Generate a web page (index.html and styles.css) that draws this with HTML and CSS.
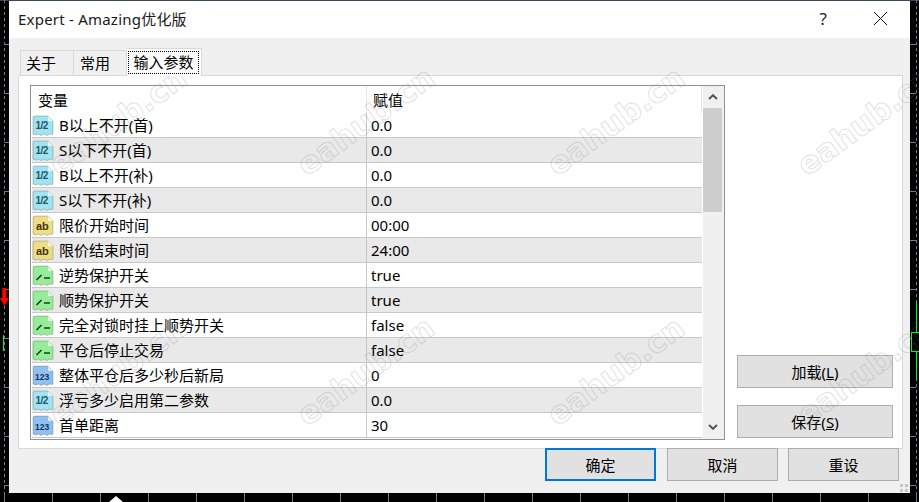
FILE: index.html
```html
<!DOCTYPE html>
<html lang="zh">
<head>
<meta charset="utf-8">
<title>Expert - Amazing优化版</title>
<link rel="stylesheet" href="styles.css">
</head>
<body>
<svg class="defs" width="0" height="0">
  <symbol id="doc" viewBox="0 0 22 22">
    <path d="M1 2.5 Q1 1 2.5 1 H16 L21 6 V18.5 Q21 19.5 19.5 19.5 L17.5 19 L15 20.5 L12 19 L9 20.5 L6.5 19 L4 20 L1 19 Z" fill="currentColor" stroke="rgba(0,0,0,.2)" stroke-width="1"/>
    <path d="M16 1 V6 H21 Z" fill="#fff" opacity=".7"/>
  </symbol>
</svg>

<div class="chart">
  <div class="arrow"></div>
  <div class="wick-l"></div>
  <div class="wick"></div>
  <div class="candle"></div>
  <div class="tip"></div>
  <div class="window">
    <header class="titlebar">
      <span class="title">Expert - Amazing优化版</span>
      <span class="help">?</span>
      <svg class="close" width="13" height="13" viewBox="0 0 13 13"><path d="M0 0 L13 13 M13 0 L0 13" stroke="#111" stroke-width="1"/></svg>
    </header>
    <main class="body">
      <nav class="tabs">
        <span class="tab tab-a">关于</span>
        <span class="tab tab-b">常用</span>
        <span class="tab active"><span class="focus">输入参数</span></span>
      </nav>
      <section class="pane">
        <div class="list">
          <div class="rows">
            <div class="row head"><span class="c1">变量</span><span class="c2">赋值</span></div>
            <div class="row"><span class="c1"><svg class="ic dbl" viewBox="0 0 22 22"><use href="#doc"/><text x="3.5" y="13.5" class="ico-txt">1/2</text></svg>B以上不开(首)</span><span class="c2">0.0</span></div>
            <div class="row alt"><span class="c1"><svg class="ic dbl" viewBox="0 0 22 22"><use href="#doc"/><text x="3.5" y="13.5" class="ico-txt">1/2</text></svg>S以下不开(首)</span><span class="c2">0.0</span></div>
            <div class="row"><span class="c1"><svg class="ic dbl" viewBox="0 0 22 22"><use href="#doc"/><text x="3.5" y="13.5" class="ico-txt">1/2</text></svg>B以上不开(补)</span><span class="c2">0.0</span></div>
            <div class="row alt"><span class="c1"><svg class="ic dbl" viewBox="0 0 22 22"><use href="#doc"/><text x="3.5" y="13.5" class="ico-txt">1/2</text></svg>S以下不开(补)</span><span class="c2">0.0</span></div>
            <div class="row"><span class="c1"><svg class="ic str" viewBox="0 0 22 22"><use href="#doc"/><text x="4" y="15" class="ico-txt ico-ab">ab</text></svg>限价开始时间</span><span class="c2">00:00</span></div>
            <div class="row alt"><span class="c1"><svg class="ic str" viewBox="0 0 22 22"><use href="#doc"/><text x="4" y="15" class="ico-txt ico-ab">ab</text></svg>限价结束时间</span><span class="c2">24:00</span></div>
            <div class="row"><span class="c1"><svg class="ic bool" viewBox="0 0 22 22"><use href="#doc"/><path d="M4.5 15 L9.5 10 M12 13 H18" class="ico-line"/></svg>逆势保护开关</span><span class="c2">true</span></div>
            <div class="row alt"><span class="c1"><svg class="ic bool" viewBox="0 0 22 22"><use href="#doc"/><path d="M4.5 15 L9.5 10 M12 13 H18" class="ico-line"/></svg>顺势保护开关</span><span class="c2">true</span></div>
            <div class="row"><span class="c1"><svg class="ic bool" viewBox="0 0 22 22"><use href="#doc"/><path d="M4.5 15 L9.5 10 M12 13 H18" class="ico-line"/></svg>完全对锁时挂上顺势开关</span><span class="c2">false</span></div>
            <div class="row alt"><span class="c1"><svg class="ic bool" viewBox="0 0 22 22"><use href="#doc"/><path d="M4.5 15 L9.5 10 M12 13 H18" class="ico-line"/></svg>平仓后停止交易</span><span class="c2">false</span></div>
            <div class="row"><span class="c1"><svg class="ic int" viewBox="0 0 22 22"><use href="#doc"/><text x="3" y="15" class="ico-txt ico-int">123</text></svg>整体平仓后多少秒后新局</span><span class="c2">0</span></div>
            <div class="row alt"><span class="c1"><svg class="ic dbl" viewBox="0 0 22 22"><use href="#doc"/><text x="3.5" y="13.5" class="ico-txt">1/2</text></svg>浮亏多少启用第二参数</span><span class="c2">0.0</span></div>
            <div class="row"><span class="c1"><svg class="ic int" viewBox="0 0 22 22"><use href="#doc"/><text x="3" y="15" class="ico-txt ico-int">123</text></svg>首单距离</span><span class="c2">30</span></div>
          </div>
          <div class="scrollbar">
            <svg class="arr" width="10" height="6" viewBox="0 0 10 6"><path d="M1 5 L5 1.2 L9 5" fill="none" stroke="#555" stroke-width="2"/></svg>
            <div class="track"><div class="thumb"></div></div>
            <svg class="arr" width="10" height="6" viewBox="0 0 10 6"><path d="M1 1 L5 4.8 L9 1" fill="none" stroke="#555" stroke-width="2"/></svg>
          </div>
        </div>
        <div class="side">
          <button class="btn side-btn">加载(<u>L</u>)</button>
          <button class="btn side-btn">保存(<u>S</u>)</button>
        </div>
      </section>
      <footer class="footer">
        <button class="btn foot-btn primary">确定</button>
        <button class="btn foot-btn">取消</button>
        <button class="btn foot-btn">重设</button>
      </footer>
      <div class="grip"></div>
    </main>
  </div>
  <span class="wm w1">eahub.cn</span>
  <span class="wm w2">eahub.cn</span>
  <span class="wm w3">eahub.cn</span>
  <span class="wm w4">eahub.cn</span>
  <span class="wm w5">eahub.cn</span>
  <span class="wm w6">eahub.cn</span>
  <span class="wm w7">eahub.cn</span>
  <span class="wm w8">eahub.cn</span>
</div>
</body>
</html>
```
FILE: styles.css
```css
* { box-sizing: border-box; }
html, body { margin: 0; padding: 0; width: 919px; height: 502px; overflow: hidden; background: #000; }
body { font-family: "Noto Sans", "Noto Sans CJK SC", sans-serif; font-size: 15px; color: #000; }
.defs { position: absolute; }

.chart {
  position: relative; width: 919px; height: 502px; overflow: hidden;
  padding: 1px 9px 9px 9px;
  background:
    repeating-linear-gradient(to bottom, #6f7c89 0 3px, transparent 3px 6px) 4px 0/1px 100% no-repeat,
    repeating-linear-gradient(to bottom, #6f7c89 0 3px, transparent 3px 6px) 916px 0/1px 100% no-repeat,
    repeating-linear-gradient(to bottom, transparent 0 44px, #6f7c89 44px 45px, transparent 45px 49px) 4px 0/5px 100% no-repeat,
    repeating-linear-gradient(to bottom, transparent 0 44px, #6f7c89 44px 45px, transparent 45px 49px) 910px 0/6px 100% no-repeat,
    repeating-linear-gradient(to right, transparent 0 4px, #6f7c89 4px 5px, transparent 5px 48px) 0 493px/100% 9px no-repeat,
    linear-gradient(#3c4650, #3c4650) 0 0/100% 1px no-repeat,
    #000;
}
.arrow { position: absolute; left: 0; top: 288px; width: 9px; height: 18px; background: #f00; clip-path: polygon(25% 0, 70% 0, 70% 55%, 100% 55%, 50% 100%, 0 55%, 25% 55%); }
.wick-l { position: absolute; left: 3px; top: 335px; width: 1px; height: 16px; background: #0f0; }
.wick { position: absolute; left: 916px; top: 302px; width: 1px; height: 78px; background: #0f0; }
.candle { position: absolute; left: 911px; top: 332px; width: 8px; height: 20px; border: 1px solid #0f0; border-right: 0; background: #000; }
.tip { position: absolute; left: 109px; top: 496px; width: 14px; height: 6px; background: #fff; clip-path: polygon(50% 0, 100% 100%, 0 100%); }

.window { position: relative; width: 901px; height: 492px; display: flex; flex-direction: column; background: #f0f0f0; }
.titlebar { height: 37px; background: #fff; display: flex; align-items: center; padding: 0 23px 2px 9px; flex: none; }
.title { flex: 1; font-size: 15px; letter-spacing: .22px; color: #1a1a1a; }
.help { font-size: 17px; margin-right: 47px; color: #222; }
.close { flex: none; }

.body { position: relative; flex: 1; padding: 10px 7px 0 9px; display: flex; flex-direction: column; }
.tabs { display: flex; align-items: flex-end; height: 27px; padding-left: 2px; position: relative; z-index: 1; }
.tab { height: 25px; background: #f0f0f0; border: 1px solid #d9d9d9; border-bottom: 0; display: flex; align-items: center; padding-left: 5px; padding-bottom: 1px; font-size: 15px; }
.tab-a { width: 54px; }
.tab-b { width: 53px; border-left: 0; padding-left: 6px; }
.tab.active { width: 75px; height: 28px; background: #fff; margin-bottom: -1px; padding-left: 1px; padding-bottom: 0; border-left: 0; }
.focus { border: 1px dotted #000; width: 71px; text-align: center; height: 23px; line-height: 20px; margin-top: -1px; }

.pane { flex: none; height: 374px; background: #fff; border: 1px solid #d9d9d9; padding: 9px 10px 8px 11px; display: flex; gap: 12px; }
.list { width: 695px; flex: none; border: 1px solid #8c919b; display: flex; background: #fff; }
.rows { flex: 1; min-width: 0; overflow: hidden; padding-left: 1px; }
.row { height: 25px; display: flex; align-items: center; border-bottom: 1px solid #c8c8c8; white-space: nowrap; }
.row.alt { background: #e9e9e9; }
.row.head { height: 27px; border-bottom: 0; border-right: 1px solid #e4e4e4; }
.c1 { width: 335px; flex: none; display: flex; align-items: center; border-right: 1px solid #c8c8c8; height: 25px; line-height: 24px; }
.c2 { padding-left: 4px; line-height: 24px; }
.head .c1 { padding-left: 6px; border-right-color: transparent; line-height: 30px; height: 100%; }
.head .c2 { padding-left: 6px; border-left: 1px solid #e4e4e4; margin-left: -1px; height: 100%; line-height: 29px; }
.ic { width: 22px; height: 22px; margin-right: 5px; flex: none; margin-top: 1px; }
.ic.dbl { color: #a2e3f0; }
.ic.str { color: #eddd85; }
.ic.bool { color: #97ec9a; }
.ic.int { color: #90c0ee; }
.ico-txt { font: 700 10px "Liberation Sans", sans-serif; fill: #20566b; letter-spacing: -.5px; }
.ico-ab { font-size: 11px; fill: #40360c; letter-spacing: 0; }
.ico-int { font-size: 8.5px; fill: #0d3560; letter-spacing: 0; }
.ico-line { fill: none; stroke: #17401c; stroke-width: 1.6; }

.scrollbar { width: 21px; margin-left: 1px; flex: none; background: #f0f0f0; display: flex; flex-direction: column; align-items: flex-start; }
.arr { flex: none; margin: 8px 0 9px 5px; }
.track { flex: 1; width: 19px; margin-top: -1px; }
.thumb { height: 104px; background: #cdcdcd; }

.side { flex: 1; display: flex; flex-direction: column; justify-content: flex-end; gap: 17px; padding-bottom: 2px; }
.btn { font: inherit; color: #000; background: #e1e1e1; border: 1px solid #adadad; padding: 0; height: 33px; }
.side-btn { width: 156px; }

.footer { display: flex; justify-content: flex-end; gap: 10px; padding-right: 4px; margin-top: -1px; position: relative; }
.foot-btn { width: 111px; }
.primary { border: 2px solid #0078d7; margin-right: 1px; }
.grip {
  position: absolute; right: 2px; bottom: 1px; width: 8px; height: 8px;
  background:
    linear-gradient(#c6c6c6, #c6c6c6) 0 0/3px 3px no-repeat,
    linear-gradient(#c6c6c6, #c6c6c6) 5px 0/3px 3px no-repeat,
    linear-gradient(#c6c6c6, #c6c6c6) 0 5px/3px 3px no-repeat,
    linear-gradient(#c6c6c6, #c6c6c6) 5px 5px/3px 3px no-repeat;
}

.wm {
  position: absolute; font-family: "DejaVu Sans", sans-serif; font-weight: 700; font-size: 31px; line-height: 1; color: transparent;
  -webkit-text-stroke: 1px rgba(120, 120, 120, .24); transform: rotate(-36deg); transform-origin: left bottom; pointer-events: none; white-space: nowrap;
}
.w1 { left: 62px; top: 150px; }
.w2 { left: 310px; top: 150px; }
.w3 { left: 560px; top: 150px; }
.w4 { left: 810px; top: 150px; }
.w5 { left: 62px; top: 400px; }
.w6 { left: 310px; top: 400px; }
.w7 { left: 560px; top: 400px; }
.w8 { left: 810px; top: 400px; }
```
